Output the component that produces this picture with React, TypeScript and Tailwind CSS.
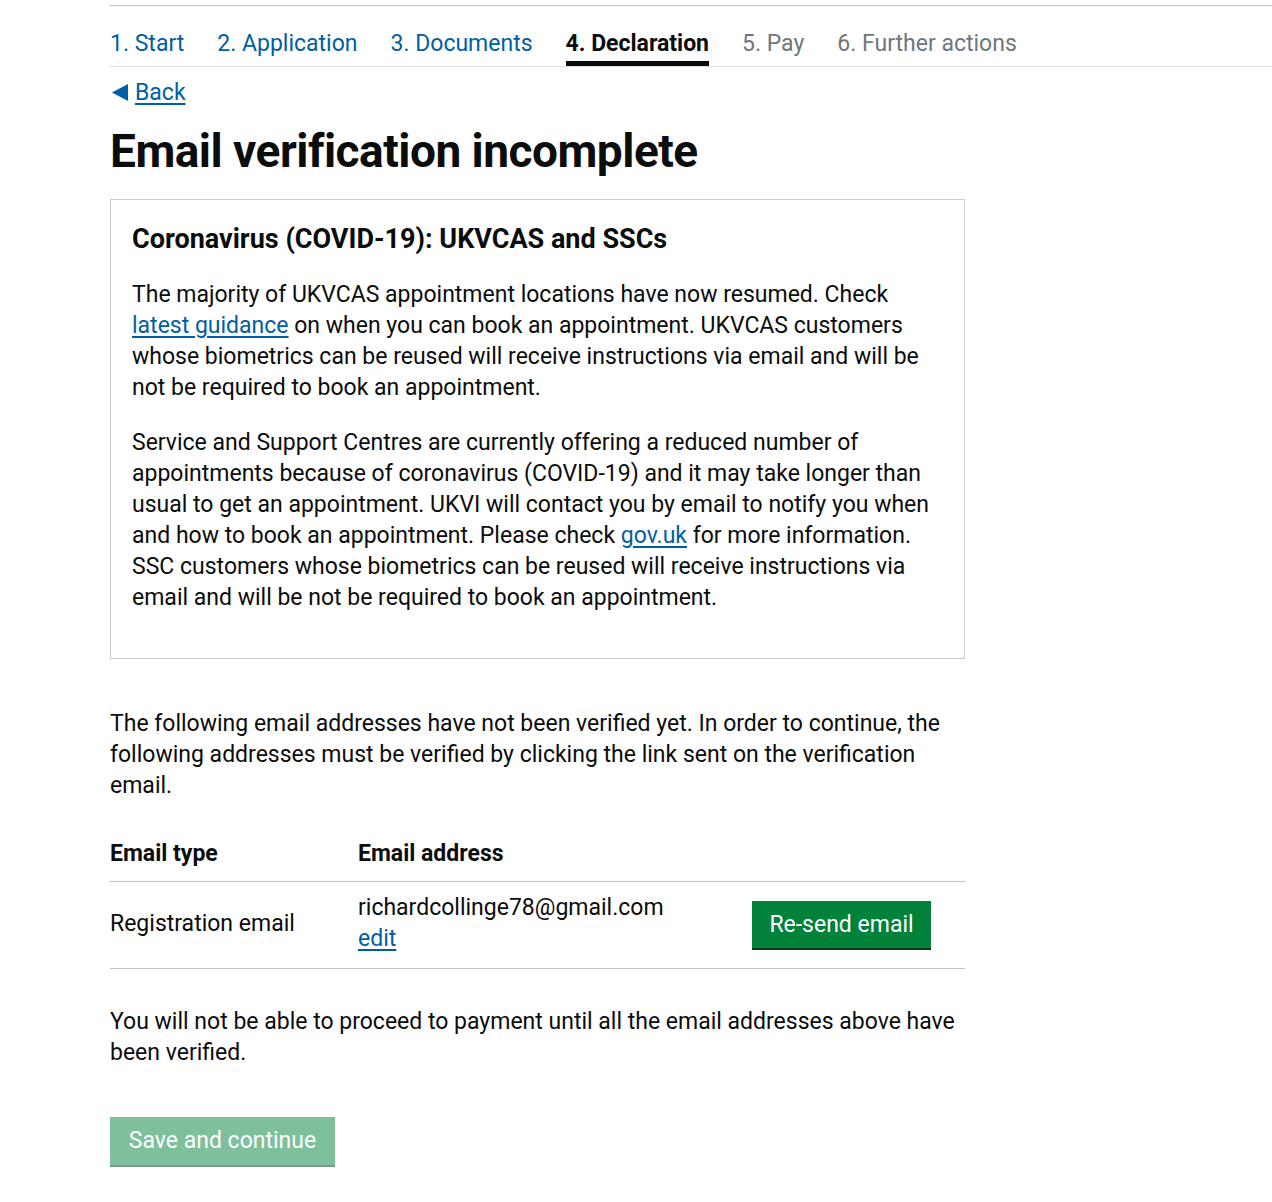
const steps = [
  { label: '1. Start', state: 'done' },
  { label: '2. Application', state: 'done' },
  { label: '3. Documents', state: 'done' },
  { label: '4. Declaration', state: 'current' },
  { label: '5. Pay', state: 'todo' },
  { label: '6. Further actions', state: 'todo' },
];

const font = { fontFamily: 'Roboto, "Liberation Sans", Arial, sans-serif' };

export default function App() {
  return (
    <div className="min-h-[1202px] bg-white text-[#0b0c0c] pt-[5px] pl-[110px]" style={font}>
      <nav className="border-t border-b border-t-[#bfc1c3] border-b-[#dee0e2]">
        <ul className="flex gap-[33px] text-[23px] leading-[31px]">
          {steps.map((s) => (
            <li
              key={s.label}
              className={
                'pt-[22px] pb-[2px] border-b-[5px] ' +
                (s.state === 'current'
                  ? 'border-[#0b0c0c] font-bold text-[#0b0c0c]'
                  : s.state === 'done'
                  ? 'border-transparent text-[#005ea5]'
                  : 'border-transparent text-[#6f777b]')
              }
            >
              {s.label}
            </li>
          ))}
        </ul>
      </nav>

      <div className="w-[855px]">
        <a href="#" className="mt-[10px] flex items-center gap-[7px] text-[23px] leading-[31px] text-[#005ea5]">
          <svg width="16" height="17" viewBox="0 0 16 17" className="ml-[2px]">
            <path d="M0 8.5 L16 0 L16 17 Z" fill="#005ea5" />
          </svg>
          <span className="underline underline-offset-[3px]">Back</span>
        </a>

        <h1 className="mt-[18px] text-[46px] leading-[50px] font-bold tracking-[-0.5px]">Email verification incomplete</h1>

        <div className="mt-[23px] border border-[#cccccc] pt-[22px] pb-[45px] pl-[21px] pr-[20px]">
          <h2 className="text-[27px] leading-[35px] font-bold">Coronavirus (COVID-19): UKVCAS and SSCs</h2>
          <p className="mt-[22px] text-[23px] leading-[31px]">
            The majority of UKVCAS appointment locations have now resumed. Check{' '}
            <a href="#" className="text-[#005ea5] underline underline-offset-[3px]">latest guidance</a> on when you can
            book an appointment. UKVCAS customers whose biometrics can be reused will receive instructions via email and
            will be not be required to book an appointment.
          </p>
          <p className="mt-[24px] text-[23px] leading-[31px]">
            Service and Support Centres are currently offering a reduced number of appointments because of coronavirus
            (COVID-19) and it may take longer than usual to get an appointment. UKVI will contact you by email to notify
            you when and how to book an appointment. Please check{' '}
            <a href="#" className="text-[#005ea5] underline underline-offset-[3px]">gov.uk</a> for more information. SSC
            customers whose biometrics can be reused will receive instructions via email and will be not be required to
            book an appointment.
          </p>
        </div>

        <p className="mt-[49px] text-[23px] leading-[31px]">
          The following email addresses have not been verified yet. In order to continue, the following addresses must be
          verified by clicking the link sent on the verification email.
        </p>

        <table className="mt-[37px] w-full text-[23px] leading-[31px] border-collapse">
          <thead>
            <tr className="border-b border-[#bfc1c3]">
              <th className="w-[248px] pb-[12px] text-left font-bold">Email type</th>
              <th className="pb-[12px] text-left font-bold" colSpan={2}>Email address</th>
            </tr>
          </thead>
          <tbody>
            <tr className="border-b border-[#bfc1c3]">
              <td className="pt-[10px] pb-[14px] align-middle">Registration email</td>
              <td className="pt-[10px] pb-[14px] align-middle">
                <div>richardcollinge78@gmail.com</div>
                <a href="#" className="text-[#005ea5] underline underline-offset-[3px]">edit</a>
              </td>
              <td className="w-[213px] pt-[10px] pb-[14px] align-middle">
                <button className="h-[47px] w-[179px] bg-[#00823b] text-white text-[23px] shadow-[0_2px_0_#003618] mt-[2px]">
                  Re-send email
                </button>
              </td>
            </tr>
          </tbody>
        </table>

        <p className="mt-[37px] text-[23px] leading-[31px]">
          You will not be able to proceed to payment until all the email addresses above have been verified.
        </p>

        <button
          disabled
          className="mt-[49px] h-[48px] w-[225px] bg-[#00823b] text-white text-[23px] shadow-[0_2px_0_#003618] opacity-50"
        >
          Save and continue
        </button>
      </div>
    </div>
  );
}
